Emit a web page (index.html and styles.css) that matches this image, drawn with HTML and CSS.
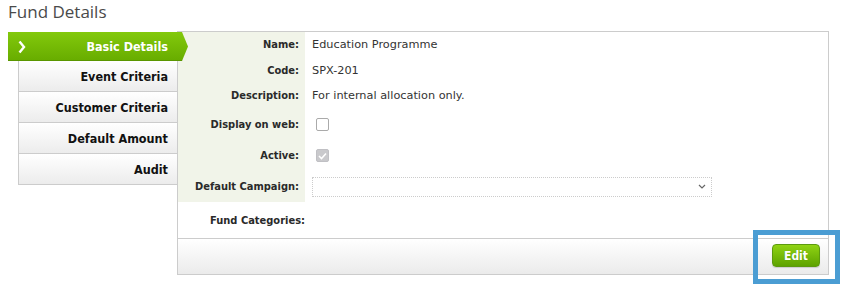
FILE: index.html
```html
<!DOCTYPE html>
<html lang="en">
<head>
  <meta charset="UTF-8" />
  <title>Fund Details</title>
  <link rel="stylesheet" href="styles.css">
</head>
<body>

  <h1 class="page-title">Fund Details</h1>

  <div class="fund">
    <!-- Side tabs -->
    <ul class="tabs">
      <li class="tab active">
        <svg class="tab-chevron" width="8" height="14" viewBox="0 0 8 14">
          <polyline points="1.5,1.5 6,7 1.5,12.5" fill="none" stroke="#fff" stroke-width="2.4"/>
        </svg>
        Basic Details
      </li>
      <li class="tab">Event Criteria</li>
      <li class="tab">Customer Criteria</li>
      <li class="tab">Default Amount</li>
      <li class="tab">Audit</li>
    </ul>

    <!-- Details panel -->
    <div class="panel">
      <div class="details">
        <div class="label">Name:</div>
        <div class="value">Education Programme</div>

        <div class="label">Code:</div>
        <div class="value">SPX-201</div>

        <div class="label">Description:</div>
        <div class="value">For internal allocation only.</div>

        <div class="label">Display on web:</div>
        <div class="value"><span class="check"></span></div>

        <div class="label">Active:</div>
        <div class="value">
          <span class="check checked">
            <svg width="9" height="8" viewBox="0 0 9 8">
              <polyline points="1,4 3.5,6.5 8,1.5" fill="none" stroke="#fff" stroke-width="1.6"/>
            </svg>
          </span>
        </div>

        <div class="label">Default Campaign:</div>
        <div class="value">
          <div class="select">
            <svg width="8" height="5" viewBox="0 0 8 5">
              <polyline points="1,1 4,4 7,1" fill="none" stroke="#666" stroke-width="1.2"/>
            </svg>
          </div>
        </div>

        <div class="label plain">Fund Categories:</div>
        <div class="value"></div>
      </div>

      <div class="panel-footer">
        <button class="edit-btn">Edit</button>
        <!-- highlight marker drawn over the footer -->
        <span class="highlight"></span>
      </div>
    </div>
  </div>

</body>
</html>
```

FILE: styles.css
```css
html {
  background: #fff;
}

body {
  margin: 0;
  padding: 0 15px 20px 8px;
  font-family: 'DejaVu Sans', Verdana, sans-serif;
  font-size: 11px;
  color: #333;
  background: #fff;
}

.page-title {
  margin: 0;
  height: 31px;
  font-family: 'Open Sans', 'Segoe UI', sans-serif;
  font-size: 17px;
  font-weight: normal;
  line-height: 23px;
  color: #4a4a4a;
}

.fund {
  display: flex;
}

.tabs {
  list-style: none;
  margin: 1px 0 0;
  padding: 0;
  width: 169px;
  flex: none;
}

.tab {
  height: 30px;
  margin-left: 10px;
  padding-right: 9px;
  display: flex;
  align-items: center;
  justify-content: flex-end;
  font-family: 'DejaVu Sans Condensed', Tahoma, sans-serif;
  font-weight: bold;
  font-size: 12.5px;
  color: #111;
  background: linear-gradient(#ffffff, #ececec);
  border-left: 1px solid #ccc;
  border-bottom: 1px solid #ccc;
}

.tab.active {
  position: relative;
  z-index: 1;
  width: 180px;
  height: 29px;
  margin-left: 0;
  padding-right: 20px;
  box-sizing: border-box;
  color: #fff;
  background: linear-gradient(#83c90c, #68ad00);
  border-left: none;
  border-bottom: 1px solid #5a9600;
  clip-path: polygon(0 0, 174px 0, 100% 50%, 174px 100%, 0 100%);
}

.tab-chevron {
  position: absolute;
  left: 10px;
  top: 8px;
}

.panel {
  flex: 1;
  border: 1px solid #ccc;
}

.details {
  display: grid;
  grid-template-columns: 127px 1fr;
  grid-template-rows: 25px 26px 25px 32px 31px 31px 36px;
}

.label {
  display: flex;
  align-items: center;
  justify-content: flex-end;
  padding-right: 6px;
  background: #f1f4e9;
  font-family: 'DejaVu Sans Condensed', Tahoma, sans-serif;
  font-weight: bold;
  color: #2a2a2a;
}

.label.plain {
  background: none;
  padding-right: 0;
}

.value {
  display: flex;
  align-items: center;
  padding-left: 7px;
  font-size: 11.3px;
}

.check {
  display: inline-flex;
  align-items: center;
  justify-content: center;
  width: 11px;
  height: 11px;
  margin-left: 4px;
  border: 1px solid #aaa;
  border-radius: 2px;
  background: #fff;
}

.check.checked {
  background: #c9c9cc;
  border-color: #c0c0c4;
}

.select {
  width: 391px;
  height: 18px;
  border: 1px dotted #ccc;
  display: flex;
  align-items: center;
  justify-content: flex-end;
  padding-right: 7px;
}

.select svg {
  margin-right: -2px;
}

.panel-footer {
  position: relative;
  height: 36px;
  border-top: 1px solid #ccc;
  background: linear-gradient(#ffffff, #ebebeb);
  display: flex;
  align-items: flex-start;
  justify-content: flex-end;
  padding: 5px 8px 0 0;
  box-sizing: border-box;
}

.highlight {
  position: absolute;
  top: -9px;
  right: -12px;
  width: 87px;
  height: 54px;
  box-sizing: border-box;
  border: 5px solid #4b9dd3;
  z-index: 2;
}

.edit-btn {
  display: block;
  width: 48px;
  height: 23px;
  padding: 0;
  font-family: 'DejaVu Sans Condensed', Tahoma, sans-serif;
  font-weight: bold;
  font-size: 12px;
  color: #fff;
  background: linear-gradient(#8fd313, #5ea300);
  border: 1px solid #5c9a0e;
  border-radius: 4px;
  box-shadow: 0 1px 1px rgba(0,0,0,0.15);
  text-shadow: 0 0 1px rgba(0,0,0,0.2);
  cursor: pointer;
}
```
